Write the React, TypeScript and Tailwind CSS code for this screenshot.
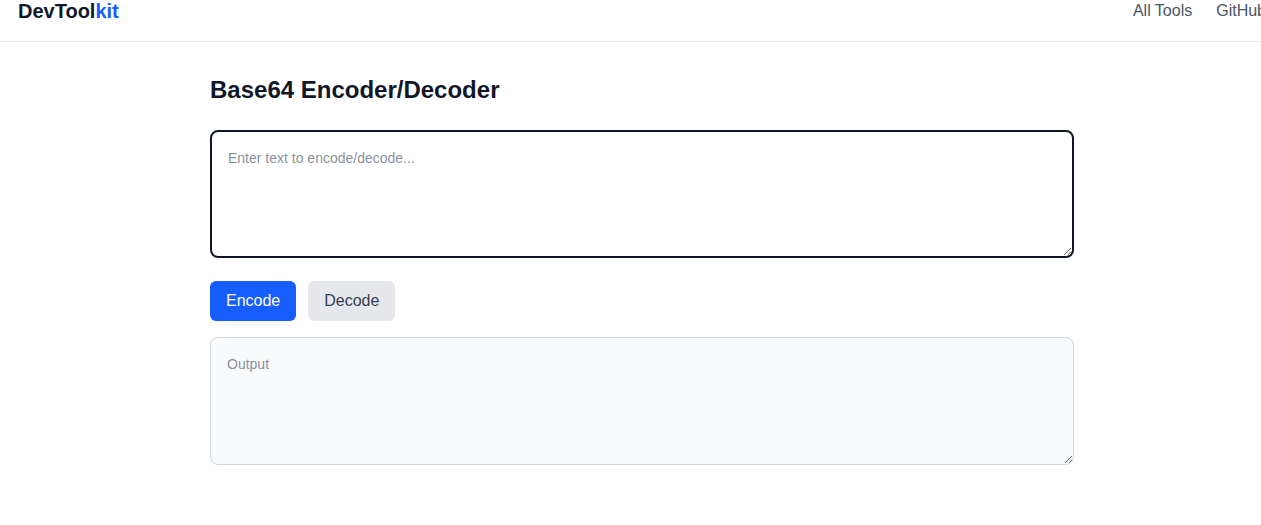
export default function App() {
    return (
        <div className="w-full overflow-hidden bg-white" style={{ fontFamily: '"Liberation Sans", Arial, sans-serif' }}>
            <div className="w-[1284px]">
                <header className="h-[42px] border-b border-gray-200 px-[18px] flex justify-between items-start">
                    <div className="pt-[1px] text-xl leading-5 font-bold text-gray-900">
                        Dev<span>Tool</span><span className="text-blue-600">kit</span>
                    </div>
                    <nav className="flex gap-6 text-base leading-5 text-gray-600 pt-[1px]">
                        <a href="#">All Tools</a>
                        <a href="#">GitHub</a>
                    </nav>
                </header>
                <main className="max-w-[864px] mx-auto pt-8 pb-10">
                    <h1 className="text-2xl leading-8 font-bold text-gray-900">Base64 Encoder/Decoder</h1>
                    <textarea
                        className="mt-6 block w-full h-32 rounded-lg border-2 border-gray-900 px-4 py-4 text-sm text-gray-900 placeholder:text-gray-500/80 outline-none"
                        placeholder="Enter text to encode/decode..."
                    />
                    <div className="mt-[23px] flex gap-3">
                        <button className="h-10 px-4 rounded-md bg-blue-600 text-white text-base">Encode</button>
                        <button className="h-10 px-4 rounded-md bg-gray-200 text-gray-700 text-base">Decode</button>
                    </div>
                    <textarea
                        readOnly
                        className="mt-4 block w-full h-32 rounded-lg border border-gray-300 bg-gray-50 px-4 py-4 text-sm text-gray-900 placeholder:text-gray-500/80 outline-none"
                        placeholder="Output"
                    />
                </main>
            </div>
        </div>
    );
}
